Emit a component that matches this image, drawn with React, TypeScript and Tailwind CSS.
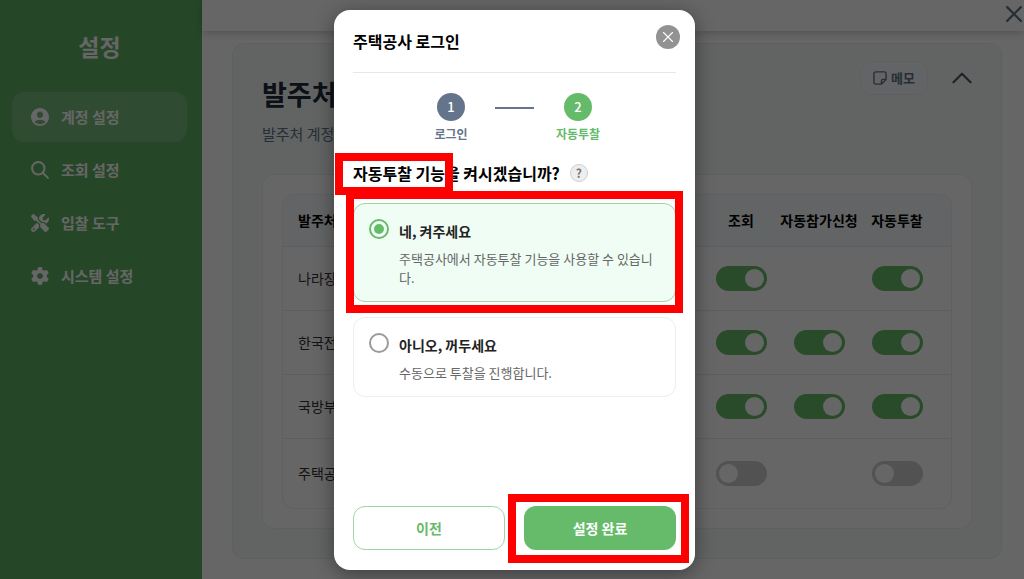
import { useState } from "react";
import { ChevronUp, X } from "lucide-react";
import { FaGear, FaScrewdriverWrench } from "react-icons/fa6";
import { MdAccountCircle } from "react-icons/md";

type Agency = {
  name: string;
  search: boolean;
  apply?: boolean;
  bid: boolean;
};

type Choice = "on" | "off";

const initialAgencies: Agency[] = [
  { name: "나라장터", search: true, bid: true },
  { name: "한국전력", search: true, apply: true, bid: true },
  { name: "국방부", search: true, apply: true, bid: true },
  { name: "주택공사", search: false, bid: false },
];

const menus = [
  { label: "계정 설정", icon: <MdAccountCircle viewBox="2 2 20 20" className="size-[18px]" />, active: true },
  { label: "조회 설정", icon: <SearchIcon />, active: false },
  { label: "입찰 도구", icon: <FaScrewdriverWrench className="size-[18px]" />, active: false },
  { label: "시스템 설정", icon: <FaGear className="size-[18px]" />, active: false },
];

const choices: { value: Choice; title: string; detail: string }[] = [
  {
    value: "on",
    title: "네, 켜주세요",
    detail: "주택공사에서 자동투찰 기능을 사용할 수 있습니다.",
  },
  {
    value: "off",
    title: "아니오, 꺼두세요",
    detail: "수동으로 투찰을 진행합니다.",
  },
];

function SearchIcon() {
  return (
    <svg viewBox="0 0 18 18" fill="none" stroke="currentColor" strokeWidth="2" strokeLinecap="round" className="size-[18px]">
      <circle cx="7.3" cy="7.3" r="6.2" />
      <path d="M11.9 11.9l5 5" />
    </svg>
  );
}

function NoteIcon() {
  return (
    <svg viewBox="0 0 14 14" fill="none" stroke="currentColor" strokeWidth="1.4" strokeLinejoin="round" className="size-3.5">
      <path d="M2.7 0.9h8.6a1.8 1.8 0 0 1 1.8 1.8v5.9l-4.5 4.5H2.7a1.8 1.8 0 0 1-1.8-1.8V2.7A1.8 1.8 0 0 1 2.7 0.9z" />
      <path d="M13 8.4h-3a1.6 1.6 0 0 0-1.6 1.6v3" />
    </svg>
  );
}

function Toggle({ label, checked, onChange }: { label: string; checked: boolean; onChange: () => void }) {
  return (
    <input
      type="checkbox"
      role="switch"
      aria-label={label}
      checked={checked}
      onChange={onChange}
      className="block h-[25px] w-[51px] mx-auto appearance-none rounded-full bg-[#cccccc] before:block before:size-[19px] before:m-[3px] before:rounded-full before:bg-white checked:bg-[#66bb6a] checked:before:ml-[29px]"
    />
  );
}

function Highlight({ className }: { className: string }) {
  return <span aria-hidden="true" className={`pointer-events-none absolute z-10 border-8 border-[#ff0000] ${className}`} />;
}

function Sidebar() {
  return (
    <aside className="w-[202px] shrink-0 bg-[#5faf64] pl-3 pr-[15px] text-white">
      <h1 className="pt-7 text-center text-[23px] leading-9 font-bold">설정</h1>
      <nav className="mt-7 flex flex-col gap-[3px]">
        {menus.map((menu) => (
          <a
            key={menu.label}
            href="#"
            className={`flex h-[50px] items-center gap-3 rounded-xl pl-[19px] text-[15px] font-bold ${menu.active ? "bg-white/15" : ""}`}
          >
            {menu.icon}
            {menu.label}
          </a>
        ))}
      </nav>
    </aside>
  );
}

function AgencyTable() {
  const [agencies, setAgencies] = useState(initialAgencies);

  const toggle = (name: string, key: "search" | "apply" | "bid") => {
    setAgencies((current) =>
      current.map((agency) => (agency.name === name ? { ...agency, [key]: !agency[key] } : agency)),
    );
  };

  return (
    <div className="overflow-hidden rounded-xl border border-[#ebeff3]">
      <table className="w-full text-sm">
        <thead>
          <tr className="h-[51px] bg-[#f8fafc] font-bold text-black">
            <th className="pl-[15px] text-left">발주처</th>
            <th className="w-[78px]">조회</th>
            <th className="w-[78px] whitespace-nowrap">자동참가신청</th>
            <th className="w-[78px]">자동투찰</th>
            <td className="w-[15px]" />
          </tr>
        </thead>
        <tbody>
          {agencies.map((agency) => (
            <tr key={agency.name} className="h-[64px] border-t border-[#e7ebef] text-[#333333] last:h-[70px]">
              <td className="pl-[15px]">{agency.name}</td>
              <td>
                <Toggle label={`${agency.name} 조회`} checked={agency.search} onChange={() => toggle(agency.name, "search")} />
              </td>
              <td>
                {agency.apply !== undefined && (
                  <Toggle label={`${agency.name} 자동참가신청`} checked={agency.apply} onChange={() => toggle(agency.name, "apply")} />
                )}
              </td>
              <td>
                <Toggle label={`${agency.name} 자동투찰`} checked={agency.bid} onChange={() => toggle(agency.name, "bid")} />
              </td>
              <td />
            </tr>
          ))}
        </tbody>
      </table>
    </div>
  );
}

function Steps() {
  return (
    <ol className="mt-5 flex justify-center text-xs font-bold">
      <li className="flex w-[88px] flex-col items-center gap-[3px] text-[#64748b]">
        <span className="flex size-7 items-center justify-center rounded-full bg-[#64748b] text-[13px] font-medium text-white">1</span>
        <span className="leading-5">로그인</span>
      </li>
      <li aria-hidden="true" className="mt-3.5 h-0.5 w-[39px] bg-[#64748b]" />
      <li className="flex w-[88px] flex-col items-center gap-[3px] text-[#66bb6a]">
        <span className="flex size-7 items-center justify-center rounded-full bg-[#66bb6a] text-[13px] font-medium text-white">2</span>
        <span className="leading-5">자동투찰</span>
      </li>
    </ol>
  );
}

function LoginModal() {
  const [choice, setChoice] = useState<Choice>("on");

  return (
    <div
      role="dialog"
      aria-modal="true"
      aria-labelledby="modal-title"
      className="flex min-h-[560px] w-[361px] flex-col rounded-2xl bg-white px-[19px] pb-5 shadow-[0_4px_20px_rgba(0,0,0,0.4)]"
    >
      <header className="flex h-[63px] items-center justify-between border-b border-[#e8e8e8]">
        <h2 id="modal-title" className="text-base font-bold text-black">주택공사 로그인</h2>
        <button
          type="button"
          aria-label="닫기"
          className="-mr-1 mb-2 flex size-6 items-center justify-center rounded-full bg-[#929292] text-white"
        >
          <X className="size-[18px]" strokeWidth={1.5} />
        </button>
      </header>

      <Steps />

      <form className="flex flex-1 flex-col" onSubmit={(event) => event.preventDefault()}>
        <div className="relative mt-[15px] flex h-7 items-center gap-2.5">
          <h3 className="text-base font-bold text-black">자동투찰 기능을 켜시겠습니까?</h3>
          <button
            type="button"
            aria-label="도움말"
            className="flex size-[18px] items-center justify-center rounded-full border border-[#d0d0d0] bg-[#eeeeee] text-xs font-bold text-[#777777]"
          >
            ?
          </button>
          <Highlight className="-left-[18px] -top-1.5 h-[42px] w-[118px]" />
        </div>

        <div className="mt-4 flex flex-col gap-[15px]">
          {choices.map((item) => (
            <label
              key={item.value}
              className="relative flex gap-2.5 rounded-xl border border-[#e8eef6] px-[15px] pt-[15px] pb-3.5 has-checked:border-[#a0d4a3] has-checked:bg-[#f0fdf4]"
            >
              <input
                type="radio"
                name="auto-bid"
                value={item.value}
                checked={choice === item.value}
                onChange={() => setChoice(item.value)}
                className="size-5 shrink-0 appearance-none rounded-full border-2 border-[#9a9a9a] before:m-[3px] before:block before:size-2.5 before:rounded-full checked:border-[#66bb6a] checked:before:bg-[#66bb6a]"
              />
              <span className="flex flex-col gap-2">
                <strong className="pt-0.5 text-sm leading-5 font-bold text-[#222222]">{item.title}</strong>
                <span className="text-[13px] leading-[19px] break-all text-[#666666]">{item.detail}</span>
              </span>
              {item.value === "on" && <Highlight className="-inset-x-2 -top-[13px] -bottom-3" />}
            </label>
          ))}
        </div>

        <div className="mt-auto grid grid-cols-2 gap-[19px] text-sm font-bold">
          <button type="button" className="h-11 rounded-xl border border-[#a0d4a3] text-[#66bb6a]">
            이전
          </button>
          <div className="relative">
            <button type="submit" className="h-11 w-full rounded-xl bg-[#66bb6a] text-white">
              설정 완료
            </button>
            <Highlight className="-left-4 -right-[13px] -top-3 -bottom-[13px]" />
          </div>
        </div>
      </form>
    </div>
  );
}

export default function App() {
  return (
    <div className="relative flex min-h-screen overflow-hidden bg-white [font-family:'Noto_Sans_CJK_KR',sans-serif]">
      <Sidebar />

      <main className="min-w-0 flex-1">
        <header className="flex h-[31px] items-center justify-end bg-white pr-0.5 pb-[3px] shadow-[0_2px_8px_rgba(0,0,0,0.2)]">
          <button type="button" aria-label="설정 닫기" className="text-[#64748b]">
            <X viewBox="5 5 14 14" className="size-4" strokeWidth={2} />
          </button>
        </header>

        <section className="mt-3 mr-[22px] mb-5 ml-[30px] rounded-xl border border-[#e9f1ec] bg-[#f5fbf7] px-[29px] pt-[17px] pb-[29px]">
          <div className="flex items-start justify-between">
            <div className="pt-[15px]">
              <h2 className="text-[27px] leading-9 font-bold text-[#1e293b]">발주처 설정</h2>
              <p className="mt-2 text-[15px] leading-7 text-[#64748b]">발주처 계정을 관리합니다.</p>
            </div>
            <div className="flex items-center gap-6">
              <button
                type="button"
                className="flex h-[34px] items-center gap-1 rounded-xl border border-[#eceef6] bg-[#f8fafc] px-3 text-[13px] font-bold text-[#64748b]"
              >
                <NoteIcon />
                메모
              </button>
              <button type="button" aria-label="접기" className="text-[#475569]">
                <ChevronUp viewBox="5 5 14 14" className="size-5" strokeWidth={1.5} />
              </button>
            </div>
          </div>

          <div className="mt-[26px] rounded-xl border border-[#eceef0] bg-white p-[19px]">
            <AgencyTable />
          </div>
        </section>
      </main>

      <div className="absolute inset-0 flex items-center justify-center bg-black/60 pl-[5px]">
        <LoginModal />
      </div>
    </div>
  );
}
